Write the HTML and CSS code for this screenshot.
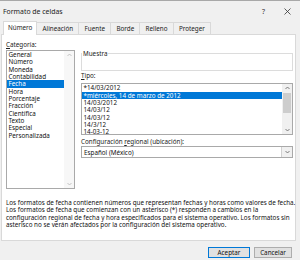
FILE: index.html
```html
<!DOCTYPE html>
<html lang="es">
<head>
<meta charset="utf-8">
<link rel="stylesheet" href="styles.css">
</head>
<body>
<div class="window">
  <div class="titlebar">
    <span class="title">Formato de celdas</span>
    <span class="help">?</span>
    <svg class="close" width="7" height="7" viewBox="0 0 7 7"><path d="M0.5 0.5L6.5 6.5M6.5 0.5L0.5 6.5" stroke="#333" stroke-width="0.8"/></svg>
  </div>
  <div class="tabs">
    <div class="tab active">Número</div>
    <div class="tab">Alineación</div>
    <div class="tab">Fuente</div>
    <div class="tab">Borde</div>
    <div class="tab">Relleno</div>
    <div class="tab">Proteger</div>
  </div>
  <div class="panel">
    <div class="cols">
      <div class="leftcol">
        <div class="label"><u>C</u>ategoría:</div>
        <div class="listbox catlist">
          <div class="items">
            <div class="item">General</div>
            <div class="item">Número</div>
            <div class="item">Moneda</div>
            <div class="item">Contabilidad</div>
            <div class="item sel">Fecha</div>
            <div class="item">Hora</div>
            <div class="item">Porcentaje</div>
            <div class="item">Fracción</div>
            <div class="item">Científica</div>
            <div class="item">Texto</div>
            <div class="item">Especial</div>
            <div class="item">Personalizada</div>
          </div>
          <div class="scroll light">
            <svg width="9" height="8" viewBox="0 0 9 8"><path d="M2.5 5L4.5 3L6.5 5" fill="none" stroke="#b5b5b5" stroke-width="0.8"/></svg>
            <div class="track"></div>
            <svg width="9" height="8" viewBox="0 0 9 8"><path d="M2.5 3L4.5 5L6.5 3" fill="none" stroke="#b5b5b5" stroke-width="0.8"/></svg>
          </div>
        </div>
      </div>
      <div class="rightcol">
        <fieldset class="sample"><legend>Muestra</legend></fieldset>
        <div class="label tipo"><u>T</u>ipo:</div>
        <div class="listbox typelist">
          <div class="items">
            <div class="item">*14/03/2012</div>
            <div class="item sel">*miércoles, 14 de marzo de 2012</div>
            <div class="item">14/03/2012</div>
            <div class="item">14/03/12</div>
            <div class="item">14/03/12</div>
            <div class="item">14/3/12</div>
            <div class="item">14-03-12</div>
          </div>
          <div class="scroll">
            <svg width="9" height="8" viewBox="0 0 9 8"><path d="M2.5 5L4.5 3L6.5 5" fill="none" stroke="#606060" stroke-width="0.8"/></svg>
            <div class="track"><div class="thumb"></div></div>
            <svg width="9" height="8" viewBox="0 0 9 8"><path d="M2.5 3L4.5 5L6.5 3" fill="none" stroke="#606060" stroke-width="0.8"/></svg>
          </div>
        </div>
        <div class="label cfg">Configuración <u>r</u>egional (ubicación):</div>
        <div class="combo">
          <span class="combotext">Español (México)</span>
          <span class="combobtn"><svg width="9" height="8" viewBox="0 0 9 8"><path d="M2.5 3L4.5 5L6.5 3" fill="none" stroke="#606060" stroke-width="0.8"/></svg></span>
        </div>
      </div>
    </div>
    <div class="desc">
      <span class="line">Los formatos de fecha contienen números que representan fechas y horas como valores de fecha.</span>
      <span class="line">Los formatos de fecha que comienzan con un asterisco (*) responden a cambios en la</span>
      <span class="line">configuración regional de fecha y hora especificados para el sistema operativo. Los formatos sin</span>
      <span class="line">asterisco no se verán afectados por la configuración del sistema operativo.</span>
    </div>
  </div>
  <div class="buttons">
    <div class="btn default">Aceptar</div>
    <div class="btn">Cancelar</div>
  </div>
</div>
</body>
</html>
```
FILE: styles.css
```css
* { box-sizing: border-box; }
html, body { margin: 0; padding: 0; }
body {
  width: 300px;
  height: 260px;
  overflow: hidden;
  background: #f0f0f0;
  font-family: "Noto Sans", "Open Sans", sans-serif;
  font-size: 6.3px;
  color: #111;
}
.window {
  height: 260px;
  border-top: 1px solid #a8a8a8;
}
.titlebar {
  height: 20px;
  display: flex;
  align-items: center;
  padding-left: 3px;
}
.title { font-size: 6.9px; color: #222; flex: 1; }
.help { font-size: 7px; color: #333; margin-right: 19px; }
.close { margin-right: 9px; }
.tabs {
  display: flex;
  align-items: flex-end;
  height: 13px;
  padding-left: 3px;
  position: relative;
  z-index: 1;
}
.tab {
  height: 12px;
  line-height: 11px;
  padding: 0 5.2px;
  border: 1px solid #d9d9d9;
  border-bottom: none;
  margin-left: -1px;
  background: #f0f0f0;
  color: #222;
}
.tab.active {
  height: 14px;
  margin-left: 0;
  margin-bottom: -1px;
  padding: 0 4px;
  background: #fff;
  line-height: 12px;
}
.panel {
  margin-left: 1px;
  margin-right: 4px;
  height: 207px;
  background: #fff;
  border: 1px solid #d9d9d9;
  padding: 6px 0 0 4px;
}
.cols {
  display: grid;
  grid-template-columns: 69px 212px;
  column-gap: 6px;
}
.label { height: 8px; line-height: 8px; color: #222; }
.label u { text-decoration: underline; text-underline-offset: 1px; }
.listbox {
  border: 1px solid #a9a9a9;
  display: flex;
  overflow: hidden;
  background: #fff;
}
.catlist { margin-top: 1px; height: 139px; }
.items { flex: 1; min-width: 0; }
.item {
  height: 7.35px;
  line-height: 7.35px;
  padding-left: 1.5px;
  white-space: nowrap;
  color: #111;
}
.item.sel { background: #0078d7; color: #fff; }
.scroll {
  width: 10px;
  display: flex;
  flex-direction: column;
  background: #f0f0f0;
}
.scroll.light { background: #f7f7f7; }
.scroll svg { display: block; flex: none; margin-left: 0.5px; }
.track { flex: 1; }
.thumb {
  margin: 1px 1px 0 1px;
  height: 20px;
  background: #cdcdcd;
}
.sample {
  margin: 8.5px 0 0 0;
  padding: 0;
  height: 21px;
  border: 1px solid #dcdcdc;
  min-width: 0;
}
.sample legend {
  font-size: 6.3px;
  line-height: 7px;
  padding: 0 1px;
  margin-left: 0;
  color: #222;
}
.tipo { margin-top: 1.5px; }
.typelist { margin-top: 3px; height: 52px; }
.typelist .items { padding-top: 0.3px; }
.cfg { margin-top: 3px; }
.combo {
  height: 12px;
  border: 1px solid #a9a9a9;
  display: flex;
  align-items: center;
}
.combotext { flex: 1; padding-left: 2px; }
.combobtn {
  width: 11px;
  height: 100%;
  border-left: 1px solid #d0d0d0;
  background: #f0f0f0;
  display: flex;
  align-items: center;
  justify-content: center;
}
.desc { margin-top: 10px; }
.line {
  display: block;
  height: 7.3px;
  line-height: 7.3px;
  white-space: nowrap;
  color: #111;
}
.buttons {
  display: flex;
  justify-content: flex-end;
  gap: 4px;
  padding-right: 8px;
  margin-top: 6px;
}
.btn {
  height: 11px;
  line-height: 9px;
  text-align: center;
  background: #e1e1e1;
  border: 1px solid #adadad;
  color: #111;
  width: 38px;
}
.btn.default { width: 42px; border-color: #0078d7; }
```
